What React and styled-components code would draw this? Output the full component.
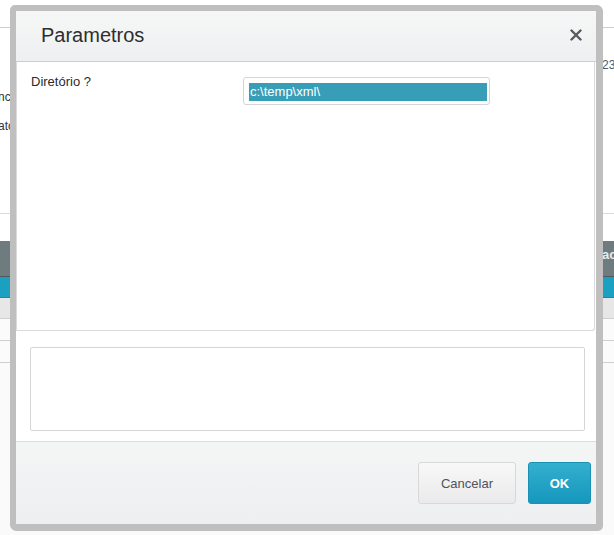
import React from "react";
import styled, { createGlobalStyle } from "styled-components";

const Global = createGlobalStyle`
  html, body { margin: 0; padding: 0; background: #fafafa; }
  body { font-family: "Liberation Sans", Arial, sans-serif; }
  * { box-sizing: border-box; }
`;

const Stage = styled.div`
  position: relative;
  width: 614px;
  height: 535px;
  overflow: hidden;
  background: #fafafa;
`;

/* ---------- background page ---------- */
const BgTop = styled.div`
  height: 28px;
  background: #fff;
  border-bottom: 1px solid #cfcfcf;
`;

const BgForm = styled.div`
  height: 186px;
  background: #fff;
  border-bottom: 1px solid #dcdcdc;
  padding-top: 29px;
  display: flex;
  flex-direction: column;
`;

const BgRow = styled.div`
  display: flex;
  justify-content: ${(p) => (p.$right ? "flex-end" : "flex-start")};
  height: ${(p) => p.$h}px;
  font-size: 12px;
  line-height: 16px;
  color: ${(p) => (p.$right ? "#4d5b69" : "#333")};
`;

const BgLeftText = styled.span`
  margin-left: -2px;
`;

const BgRightText = styled.span`
  width: 12px;
  overflow: hidden;
  white-space: nowrap;
`;

const BgGap = styled.div`
  height: 27px;
  background: #fff;
`;

const GridHead = styled.div`
  height: 36px;
  background: #6f7c7f;
  border-bottom: 1px solid #4f585a;
  display: flex;
  justify-content: flex-end;
  align-items: flex-start;
  padding-top: 6px;
  color: #e8ecec;
  font-size: 13px;
  font-weight: bold;
`;

const GridTeal = styled.div`
  height: 21px;
  background: #1ba0c1;
  border-bottom: 1px solid #178aa6;
`;

const GridRow = styled.div`
  height: ${(p) => p.$h}px;
  background: ${(p) => p.$bg};
  border-bottom: 1px solid #cfcfcf;
`;

/* ---------- dialog ---------- */
const Dialog = styled.div`
  position: absolute;
  left: 10px;
  top: 5px;
  width: 592px;
  border: 6px solid #bfbfbf;
  border-radius: 5px;
  box-shadow: 1px 1px 0 #bfbfbf;
  background: #fff;
  display: flex;
  flex-direction: column;
`;

const Header = styled.div`
  height: 51px;
  background: linear-gradient(#f6f7f7, #eeeff0);
  border-bottom: 1px solid #cdcdcd;
  display: flex;
  align-items: center;
  justify-content: space-between;
  padding: 0 14px 1px 25px;
`;

const Title = styled.h1`
  margin: 0;
  font-family: "Liberation Sans", Arial, sans-serif;
  font-weight: normal;
  font-size: 20px;
  color: #2e2e2e;
`;

const Close = styled.button`
  border: 0;
  background: none;
  padding: 0;
  width: 12px;
  height: 12px;
  display: flex;
  margin-top: -2px;
`;

const Content = styled.div`
  height: 269px;
  margin-right: 1px;
  border: 1px solid #dadada;
  border-top: 0;
  border-radius: 0 0 3px 0;
  display: flex;
  align-items: flex-start;
  padding: 12px 0 0 14px;
`;

const Label = styled.label`
  width: 212px;
  font-size: 13px;
  line-height: 16px;
  color: #2b2b2b;
`;

const Field = styled.div`
  width: 247px;
  height: 28px;
  margin-top: 3px;
  border: 1px solid #d2d4d6;
  border-radius: 3px;
  background: #fff;
  padding: 5px 2px 3px 5px;
`;

const Selected = styled.div`
  height: 18px;
  background: #389eb8;
  color: #fff;
  font-size: 13px;
  line-height: 18px;
  padding-left: 1px;
  white-space: nowrap;
`;

const Body = styled.div`
  height: 110px;
  padding: 16px 11px 10px 14px;
`;

const Memo = styled.div`
  height: 84px;
  border: 1px solid #d4d6d6;
  border-radius: 2px;
  background: #fff;
`;

const Footer = styled.div`
  height: 83px;
  border-top: 1px solid #dcdcdc;
  background: linear-gradient(#f4f5f5, #eeeff0);
  display: flex;
  justify-content: flex-end;
  align-items: flex-start;
  gap: 12px;
  padding: 20px 5px 0 0;
`;

const Button = styled.button`
  height: 42px;
  width: ${(p) => p.$w}px;
  border-radius: 3px;
  font-family: "Liberation Sans", Arial, sans-serif;
  font-size: 13px;
  cursor: pointer;
  ${(p) =>
    p.$primary
      ? `
    background: linear-gradient(#34afcf, #1597bc);
    border: 1px solid #1891b3;
    color: #fff;
    font-weight: bold;
  `
      : `
    background: linear-gradient(#f8f8f8, #eaeaea);
    border: 1px solid #d8d8d8;
    color: #4e535c;
  `}
`;

export default function App() {
  return (
    <>
      <Global />
      <Stage>
        <BgTop />
        <BgForm>
          <BgRow $right $h={32}>
            <BgRightText>23</BgRightText>
          </BgRow>
          <BgRow $h={29}>
            <BgLeftText>nc</BgLeftText>
          </BgRow>
          <BgRow $h={29}>
            <BgLeftText>ato</BgLeftText>
          </BgRow>
        </BgForm>
        <BgGap />
        <GridHead>
          <BgRightText>ac</BgRightText>
        </GridHead>
        <GridTeal />
        <GridRow $h={21} $bg="#e7e7e7" />
        <GridRow $h={22} $bg="#fbfbfb" />
        <GridRow $h={22} $bg="#fbfbfb" />

        <Dialog role="dialog" aria-label="Parametros">
          <Header>
            <Title>Parametros</Title>
            <Close aria-label="Fechar">
              <svg width="12" height="12" viewBox="0 0 12 12">
                <path
                  d="M1.5 1.5 L10.5 10.5 M10.5 1.5 L1.5 10.5"
                  stroke="#555a60"
                  strokeWidth="2.4"
                  strokeLinecap="round"
                />
              </svg>
            </Close>
          </Header>
          <Content>
            <Label>Diretório ?</Label>
            <Field>
              <Selected>c:\temp\xml\</Selected>
            </Field>
          </Content>
          <Body>
            <Memo />
          </Body>
          <Footer>
            <Button $w={98}>Cancelar</Button>
            <Button $w={63} $primary>
              OK
            </Button>
          </Footer>
        </Dialog>
      </Stage>
    </>
  );
}
